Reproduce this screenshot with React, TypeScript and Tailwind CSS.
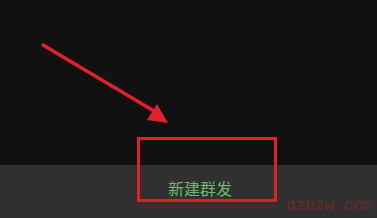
import React from "react";

export default function App() {
  return (
    <div className="relative w-[377px] h-[218px] overflow-hidden flex flex-col bg-[#111111]" style={{ fontFamily: '"Noto Sans CJK SC", "Noto Sans", sans-serif' }}>
      <div className="flex-1 bg-[#111111]" />
      <div className="h-[53px] bg-[#303030] flex items-center justify-center pl-[23px] pb-[8px]">
        <span className="text-[16px] leading-none text-[#6fb873]">新建群发</span>
      </div>
      {/* annotation arrow */}
      <svg className="absolute left-0 top-0" width="377" height="218" viewBox="0 0 377 218">
        <line x1="43" y1="45" x2="154" y2="111" stroke="#e3202b" strokeWidth="3.5" strokeLinecap="round" />
        <polygon points="147,120 157,104 168,123" fill="#e3202b" />
      </svg>
      {/* annotation box */}
      <div className="absolute left-[137px] top-[137px] w-[140px] h-[65px] border-[3px] border-[#e0202c]" />
      {/* watermark */}
      <div className="absolute left-[286px] top-[198px] text-[16px] leading-none text-[#6b2a2e]" style={{ fontFamily: '"Liberation Mono", monospace' }}>dzbzw.com</div>
    </div>
  );
}
